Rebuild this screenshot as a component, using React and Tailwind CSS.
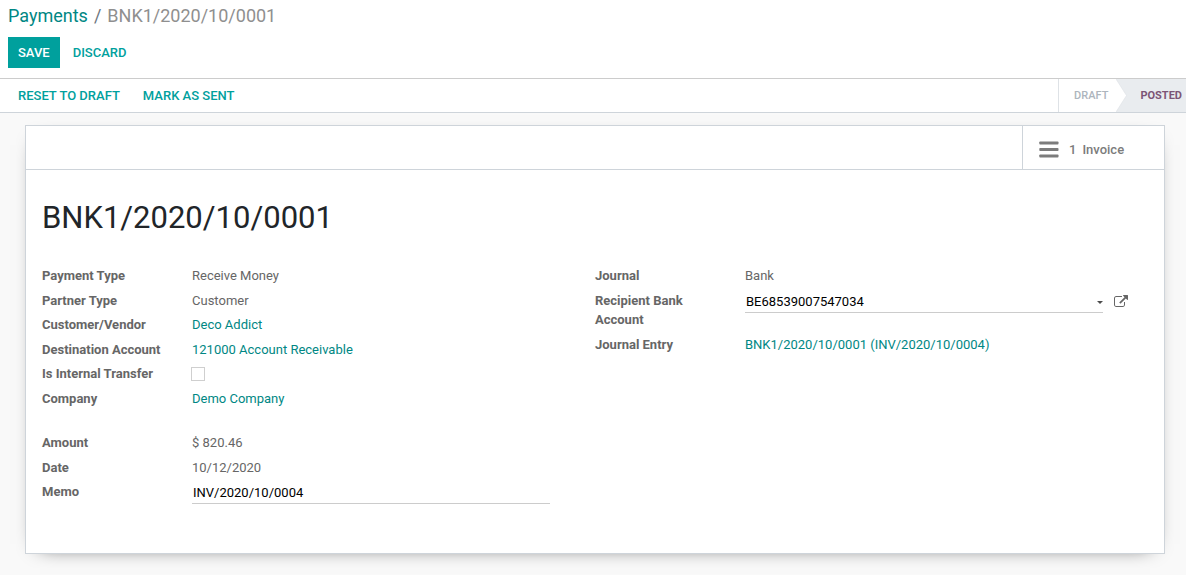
import React from "react";

const link = "text-[#008784] hover:underline";

function Row({ label, htmlFor, children }) {
  return (
    <div className="flex pb-[5px]">
      <div className="w-[150px] shrink-0 pr-8 font-bold text-[#666666]">
        {htmlFor ? <label htmlFor={htmlFor}>{label}</label> : label}
      </div>
      <div className="min-w-0 flex-1 text-[#666666]">{children}</div>
    </div>
  );
}

function ExternalLinkIcon() {
  return (
    <svg viewBox="0 0 1792 1664" className="h-[13px] w-[14px]" fill="currentColor" aria-hidden="true">
      <path d="M1408 928v320q0 119-84.5 203.5t-203.5 84.5h-832q-119 0-203.5-84.5t-84.5-203.5v-832q0-119 84.5-203.5t203.5-84.5h704q14 0 23 9t9 23v64q0 14-9 23t-23 9h-704q-66 0-113 47t-47 113v832q0 66 47 113t113 47h832q66 0 113-47t47-113v-320q0-14 9-23t23-9h64q14 0 23 9t9 23zm384-864v512q0 26-19 45t-45 19-45-19l-176-176-652 652q-10 10-23 10t-23-10l-114-114q-10-10-10-23t10-23l652-652-176-176q-19-19-19-45t19-45 45-19h512q26 0 45 19t19 45z" />
    </svg>
  );
}

function BarsIcon() {
  return (
    <svg viewBox="0 0 20 17" className="h-[17px] w-5" fill="#7c7c7c" aria-hidden="true">
      <rect x="0.3" y="0.5" width="19.2" height="3" rx="0.8" />
      <rect x="0.3" y="7" width="19.2" height="3" rx="0.8" />
      <rect x="0.3" y="13.5" width="19.2" height="3" rx="0.8" />
    </svg>
  );
}

export default function App() {
  return (
    <div className="flex min-h-screen flex-col bg-[#f9f9f9] font-[Roboto,sans-serif] text-[13px] leading-normal text-[#666666]">
      <header className="border-b border-[#cccccc] bg-white px-2 pt-1 pb-[10px]">
        <nav aria-label="Breadcrumb" className="flex gap-[6px] text-[18px] leading-6">
          <a href="#payments" className={link}>Payments</a>
          <span className="text-[#6c757d]">/</span>
          <span className="text-[#8f8f8f]">BNK1/2020/10/0001</span>
        </nav>
        <div className="mt-[9px] flex">
          <button type="button" className="h-[31px] bg-[#00a09d] px-[10px] font-medium text-white">SAVE</button>
          <button type="button" className="h-[31px] px-[13px] font-medium text-[#00a09d]">DISCARD</button>
        </div>
      </header>

      <div className="flex h-[34px] justify-between border-b border-[#ced4da] bg-white">
        <div className="flex gap-[23px] pl-[18px]">
          <button type="button" className="font-medium text-[#00a09d]">RESET TO DRAFT</button>
          <button type="button" className="font-medium text-[#00a09d]">MARK AS SENT</button>
        </div>
        <ol className="flex text-[11px] leading-4">
          <li className="flex items-center border-l border-[#dee2e6] pr-2 pl-[15px] font-medium text-[#adb5bd]">DRAFT</li>
          <li className="flex items-center bg-[#e9ecef] pr-1 font-bold text-[#7c5576]" aria-current="step">
            <svg viewBox="0 0 11 33" className="mr-[13px] h-[33px] w-[11px]" preserveAspectRatio="none" aria-hidden="true">
              <path d="M0 0L10.5 16.5L0 33Z" fill="#ffffff" />
              <path d="M0 0L10.5 16.5L0 33" fill="none" stroke="#dee2e6" strokeWidth="0.6" />
            </svg>
            POSTED
          </li>
        </ol>
      </div>

      <main className="pt-3 pr-[21px] pb-[21px] pl-[25px]">
        <section className="border border-[#ced4da] bg-white pb-[44px] shadow-[0_5px_20px_-15px_#000]">
          <div className="flex justify-end border-b border-[#ced4da]">
            <button type="button" className="flex h-[43px] w-[142px] items-center border-l border-[#ced4da] pt-1 pl-4 font-medium text-[#7c7c7c]">
              <BarsIcon />
              <span className="ml-[10px]">1</span>
              <span className="ml-[6px]">Invoice</span>
            </button>
          </div>

          <div className="px-4 pt-7">
            <h1 className="text-[31px] leading-10 text-[#212529]">BNK1/2020/10/0001</h1>

            <div className="mt-7 grid grid-cols-2">
              <div className="pr-[45px]">
                <Row label="Payment Type">Receive Money</Row>
                <Row label="Partner Type">Customer</Row>
                <Row label="Customer/Vendor"><a href="#partner" className={link}>Deco Addict</a></Row>
                <div className="flex pb-[5px]">
                  <div className="w-[150px] shrink-0 font-bold">Destination Account</div>
                  <a href="#account" className={link}>121000 Account Receivable</a>
                </div>
                <div className="flex items-center pb-[5px]">
                  <label htmlFor="internal" className="w-[149px] shrink-0 font-bold">Is Internal Transfer</label>
                  <input id="internal" type="checkbox" className="size-[14px] appearance-none border border-[#cfcfcf] bg-white checked:bg-[#00a09d]" />
                </div>
                <Row label="Company"><a href="#company" className={link}>Demo Company</a></Row>
              </div>

              <div>
                <Row label="Journal">Bank</Row>
                <Row label="Recipient Bank Account" htmlFor="bank">
                  <div className="flex">
                    <div className="relative flex-1">
                      <select id="bank" className="block h-[22px] w-full appearance-none border-b border-[#cccccc] bg-transparent pt-px pr-4 pl-px text-black outline-none">
                        <option>BE68539007547034</option>
                      </select>
                      <svg viewBox="0 0 6 3" className="pointer-events-none absolute top-[10px] right-0 h-[3px] w-[6px]" aria-hidden="true">
                        <path d="M0 0H6L3 3Z" fill="#4c4c4c" />
                      </svg>
                    </div>
                    <button type="button" aria-label="Open record" className="flex w-[45px] items-center pl-[11px] text-[#666666]">
                      <ExternalLinkIcon />
                    </button>
                  </div>
                </Row>
                <Row label="Journal Entry"><a href="#entry" className={link}>BNK1/2020/10/0001 (INV/2020/10/0004)</a></Row>
              </div>

              <div className="pt-5 pr-[45px]">
                <Row label="Amount">$ 820.46</Row>
                <Row label="Date">10/12/2020</Row>
                <Row label="Memo" htmlFor="memo">
                  <input id="memo" type="text" defaultValue="INV/2020/10/0004" className="block h-[22px] w-full border-b border-[#cccccc] bg-transparent px-px text-black outline-none" />
                </Row>
              </div>
            </div>
          </div>
        </section>
      </main>
    </div>
  );
}
